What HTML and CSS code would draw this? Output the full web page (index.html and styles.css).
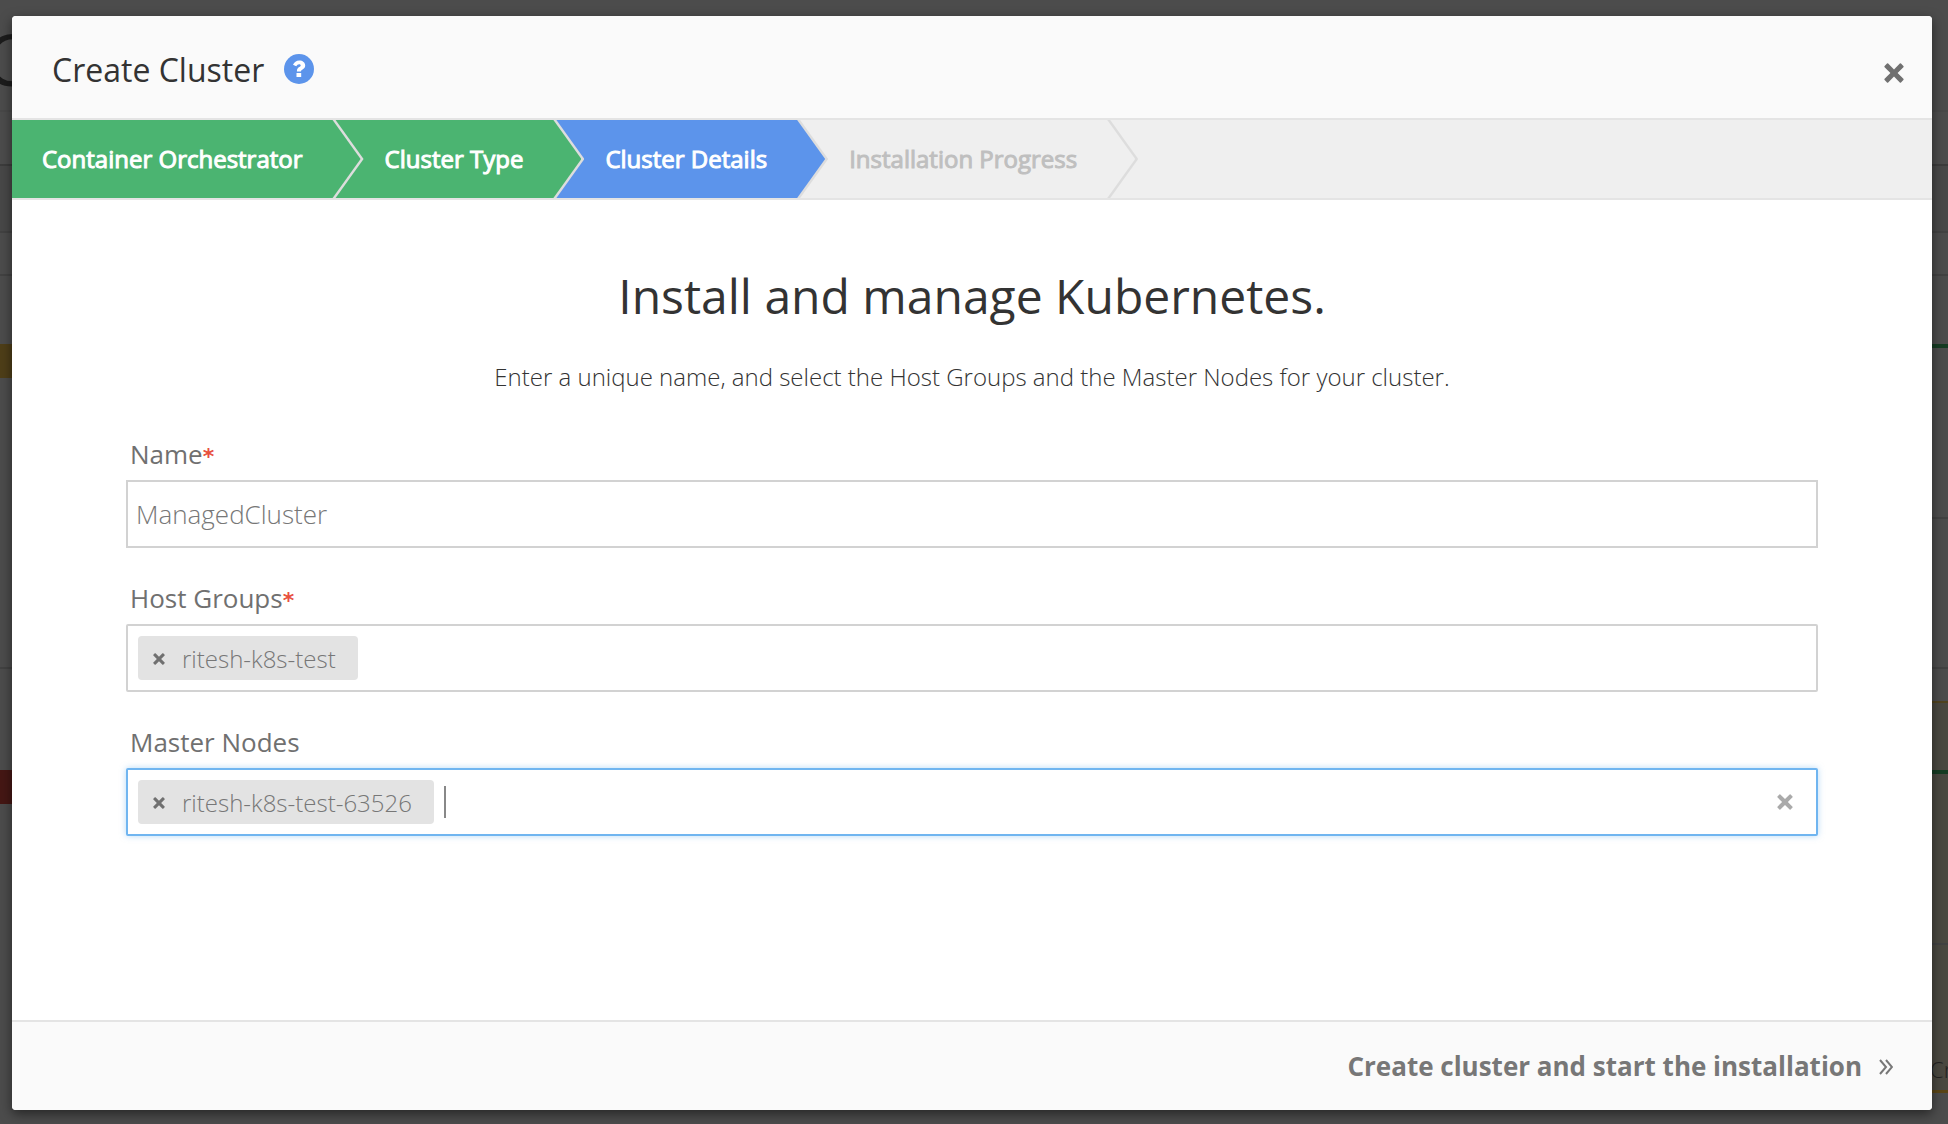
FILE: index.html
```html
<!DOCTYPE html>
<html lang="en">
<head>
<meta charset="utf-8">
<meta name="viewport" content="width=device-width, initial-scale=1">
<title>Create Cluster</title>
<link rel="stylesheet" href="styles.css">
</head>
<body>
<svg class="symbols" aria-hidden="true">
  <symbol id="icon-times" viewBox="0 0 20 20">
    <path d="M4.2 .6 10 6.400 15.800 .6Q16.400 0 17 .6L19.400 3Q20 3.600 19.400 4.200L13.600 10 19.400 15.800Q20 16.400 19.400 17L17 19.400Q16.400 20 15.800 19.400L10 13.600 4.200 19.400Q3.600 20 3 19.400L.6 17Q0 16.400 .6 15.800L6.400 10 .6 4.200Q0 3.600 .6 3L3 .6Q3.600 0 4.200 .6Z" fill="currentColor"/>
  </symbol>
</svg>

<div class="page" aria-hidden="true">
  <div class="page-title">C</div>
  <div class="page-row page-tabs"></div>
  <div class="page-row page-filter"></div>
  <div class="page-row page-head"></div>
  <div class="page-row page-gap"></div>
  <div class="page-row page-group">
    <span class="status status-warning"></span>
    <div class="tile"><div class="tile-top"></div></div>
  </div>
  <div class="page-row page-head-small"></div>
  <div class="page-row page-group page-group-last">
    <span class="status status-error"></span>
    <div class="tile tile-warning"><div class="tile-head"></div><div class="tile-top"></div><div class="tile-text">Cr</div></div>
  </div>
</div>

<div class="overlay">
  <main class="modal" role="dialog" aria-labelledby="modal-title">
    <header class="modal-header">
      <h1 class="modal-title" id="modal-title">Create Cluster</h1>
      <button class="icon-button help" type="button" aria-label="Help">
        <svg viewBox="0 0 30 30" width="30" height="30"><circle cx="15" cy="15" r="15" fill="#5c94eb"/><path d="M9 10.800C10.300 8.200 12.200 6.500 15.300 6.500c3.300 0 5.900 2.100 5.900 4.900 0 2.200-1.300 3.200-2.600 4-1.200.7-1.700 1.100-1.700 2.100h-4c0-2.400.8-3.500 2.300-4.400 1-.6 1.500-.9 1.500-1.600 0-.8-.7-1.300-1.600-1.300-1.300 0-1.900.8-2.900 2.100z" fill="#fff"/><path d="M12.500 19h4.700v4h-4.700z" fill="#fff"/></svg>
      </button>
      <button class="icon-button close" type="button" aria-label="Close"><svg width="20" height="20"><use href="#icon-times"/></svg></button>
    </header>

    <ol class="steps">
      <li class="step step-done"><span class="step-label">Container Orchestrator</span></li>
      <li class="step step-done"><span class="step-label">Cluster Type</span></li>
      <li class="step step-current" aria-current="step"><span class="step-label">Cluster Details</span></li>
      <li class="step"><span class="step-label">Installation Progress</span></li>
    </ol>

    <form class="modal-body" id="cluster-form">
      <h2 class="heading">Install and manage Kubernetes.</h2>
      <p class="intro">Enter a unique name, and select the Host Groups and the Master Nodes for your cluster.</p>

      <div class="field">
        <label class="label" for="name">Name<span class="required">*</span></label>
        <input class="control text-control" id="name" type="text" value="ManagedCluster" required>
      </div>
      <div class="field">
        <label class="label" for="host-groups">Host Groups<span class="required">*</span></label>
        <div class="control tag-control">
          <span class="tag"><button class="icon-button tag-remove" type="button" aria-label="Remove ritesh-k8s-test"><svg width="12" height="12"><use href="#icon-times"/></svg></button>ritesh-k8s-test</span>
          <input class="tag-input" id="host-groups" type="text">
        </div>
      </div>
      <div class="field">
        <label class="label" for="master-nodes">Master Nodes</label>
        <div class="control tag-control is-focused">
          <span class="tag"><button class="icon-button tag-remove" type="button" aria-label="Remove ritesh-k8s-test-63526"><svg width="12" height="12"><use href="#icon-times"/></svg></button>ritesh-k8s-test-63526</span>
          <input class="tag-input" id="master-nodes" type="text">
          <button class="icon-button clear" type="button" aria-label="Clear all"><svg width="16" height="16"><use href="#icon-times"/></svg></button>
        </div>
      </div>
    </form>

    <footer class="modal-footer">
      <button class="submit" type="submit" form="cluster-form">Create cluster and start the installation
        <svg width="14" height="16" viewBox="0 0 14 16" fill="none" stroke="currentColor" stroke-width="2"><path d="M1 1l6 7-6 7M7 1l6 7-6 7"/></svg>
      </button>
    </footer>
  </main>
</div>
</body>
</html>
```
FILE: styles.css
```css
* { box-sizing: border-box; }

body {
  margin: 0;
  min-height: 100vh;
  display: grid;
  background: #4c4c4c;
  color: #333;
  font-family: "Open Sans", "Noto Sans", sans-serif;
  font-size: 24px;
}

.page, .overlay { grid-area: 1 / 1; min-width: 0; }

.symbols { position: absolute; width: 0; height: 0; }

/* Dimmed page behind the dialog */
.page { display: flex; flex-direction: column; overflow: hidden; }
.page-title {
  height: 110px;
  margin-left: -16px;
  line-height: 116px;
  font-size: 72px;
  color: #1c1c1c;
}
.page-row { border-top: 2px solid #424242; }
.page-tabs { height: 54px; border-color: #484848; }
.page-filter { height: 67px; background: #484848; border-color: #3c3c3c; }
.page-head { height: 43px; }
.page-gap { height: 70px; }
.page-group { display: flex; justify-content: space-between; height: 323px; border: 0; }
.page-head-small { height: 34px; }
.status { width: 50%; height: 34px; }
.status-warning { background: #4e3e18; }
.status-error { background: #451714; }
.tile { width: 50%; border-top: 4px solid #163c23; }
.tile-top { height: 171px; border-bottom: 2px solid #424242; }
.page-group-last { flex: 1; margin-top: 69px; border-top: 0; }
.tile-warning {
  width: 44px;
  height: 392px;
  margin-top: -69px;
  background: #4a4840;
  border-top: 2px solid #50431f;
  border-bottom: 3px solid #5a4517;
}
.tile-head { height: 71px; border-bottom: 4px solid #163c23; }
.tile-text { margin: 107px 0 0 26px; font-size: 22px; font-weight: 300; line-height: 34px; color: #222; }

/* Dialog */
.overlay { z-index: 1; display: grid; padding: 16px 16px 14px 12px; }
.modal {
  display: flex;
  flex-direction: column;
  min-width: 0;
  background: #fff;
  border-radius: 4px;
  box-shadow: 0 4px 12px rgba(0, 0, 0, .5);
  overflow: hidden;
}

.modal-header {
  display: flex;
  align-items: center;
  gap: 20px;
  height: 104px;
  padding: 4px 28px 0 40px;
  background: #fafafa;
  border-bottom: 2px solid #e4e4e4;
}
.modal-title { margin: 0; padding-top: 2px; font-size: 32px; font-weight: 400; line-height: 44px; }

.icon-button {
  display: flex;
  padding: 0;
  border: 0;
  background: none;
  color: #707070;
  cursor: pointer;
}
.close { margin-left: auto; padding-top: 8px; }

/* Progress steps */
.steps {
  display: flex;
  margin: 0;
  padding: 0;
  list-style: none;
  background: #efefef;
  border-bottom: 2px solid #e4e4e4;
}
.step {
  --fill: #efefef;
  display: grid;
  position: relative;
  height: 78px;
  margin-left: -30px;
  background: #ddd;
  color: #bfbfbf;
  clip-path: polygon(0 0, calc(100% - 28px) 0, 100% 50%, calc(100% - 28px) 100%, 0 100%);
}
.step:first-child { margin-left: 0; }
.step:nth-child(1) { z-index: 4; }
.step:nth-child(2) { z-index: 3; }
.step:nth-child(3) { z-index: 2; }
.step-done { --fill: #4bb471; color: #fff; }
.step-current { --fill: #5c94eb; color: #fff; }
.step-label {
  margin-right: 3px;
  padding: 0 58px 0 51px;
  background: var(--fill);
  -webkit-text-stroke: 1px currentColor;
  line-height: 78px;
  white-space: nowrap;
  clip-path: polygon(0 0, calc(100% - 28px) 0, 100% 50%, calc(100% - 28px) 100%, 0 100%);
}
.step:first-child .step-label { padding-left: 30px; }

/* Form */
.modal-body { flex: 1; padding: 60px 114px 32px; }
.heading { margin: 0; font-size: 48px; font-weight: 400; line-height: 72px; text-align: center; }
.intro { margin: 27px 0 41px; font-weight: 300; line-height: 36px; text-align: center; }
.field { margin-bottom: 32px; }
.label {
  display: block;
  height: 44px;
  padding-left: 4px;
  font-size: 26px;
  line-height: 36px;
  color: #707070;
}
.required { color: #e8503f; font: 700 22px/1 "DejaVu Sans", sans-serif; }
.control {
  display: flex;
  align-items: center;
  width: 100%;
  height: 68px;
  padding: 0 10px;
  border: 2px solid #d2d2d2;
  background: #fff;
  color: #777;
}
.text-control { padding: 0 8px; font: 300 26px "Open Sans", "Noto Sans", sans-serif; }
.tag-control { gap: 10px; border-radius: 2px; }
.is-focused { border-color: #70b5f0; box-shadow: 0 0 6px rgba(112, 181, 240, .5); }
.tag {
  display: flex;
  align-items: center;
  gap: 17px;
  height: 44px;
  padding: 0 22px 0 15px;
  border-radius: 4px;
  background: #e3e3e3;
  font-weight: 300;
  white-space: nowrap;
}
.tag-remove { padding-top: 2px; }
.tag-input {
  flex: 1;
  min-width: 0;
  height: 32px;
  padding: 0;
  border: 0;
  outline: 0;
  background: none;
  font: 300 24px "Open Sans", "Noto Sans", sans-serif;
}
.is-focused .tag-input { border-left: 2px solid #888; }
.clear { margin-right: 13px; color: #aaa; }

.modal-footer {
  display: flex;
  align-items: center;
  justify-content: flex-end;
  height: 90px;
  padding: 0 39px;
  background: #fafafa;
  border-top: 2px solid #e4e4e4;
}
.submit {
  display: flex;
  align-items: center;
  gap: 17px;
  padding: 0;
  border: 0;
  background: none;
  color: #777;
  font: 700 26px/36px "Open Sans", "Noto Sans", sans-serif;
  cursor: pointer;
}
.submit svg { margin-top: 2px; }
```
